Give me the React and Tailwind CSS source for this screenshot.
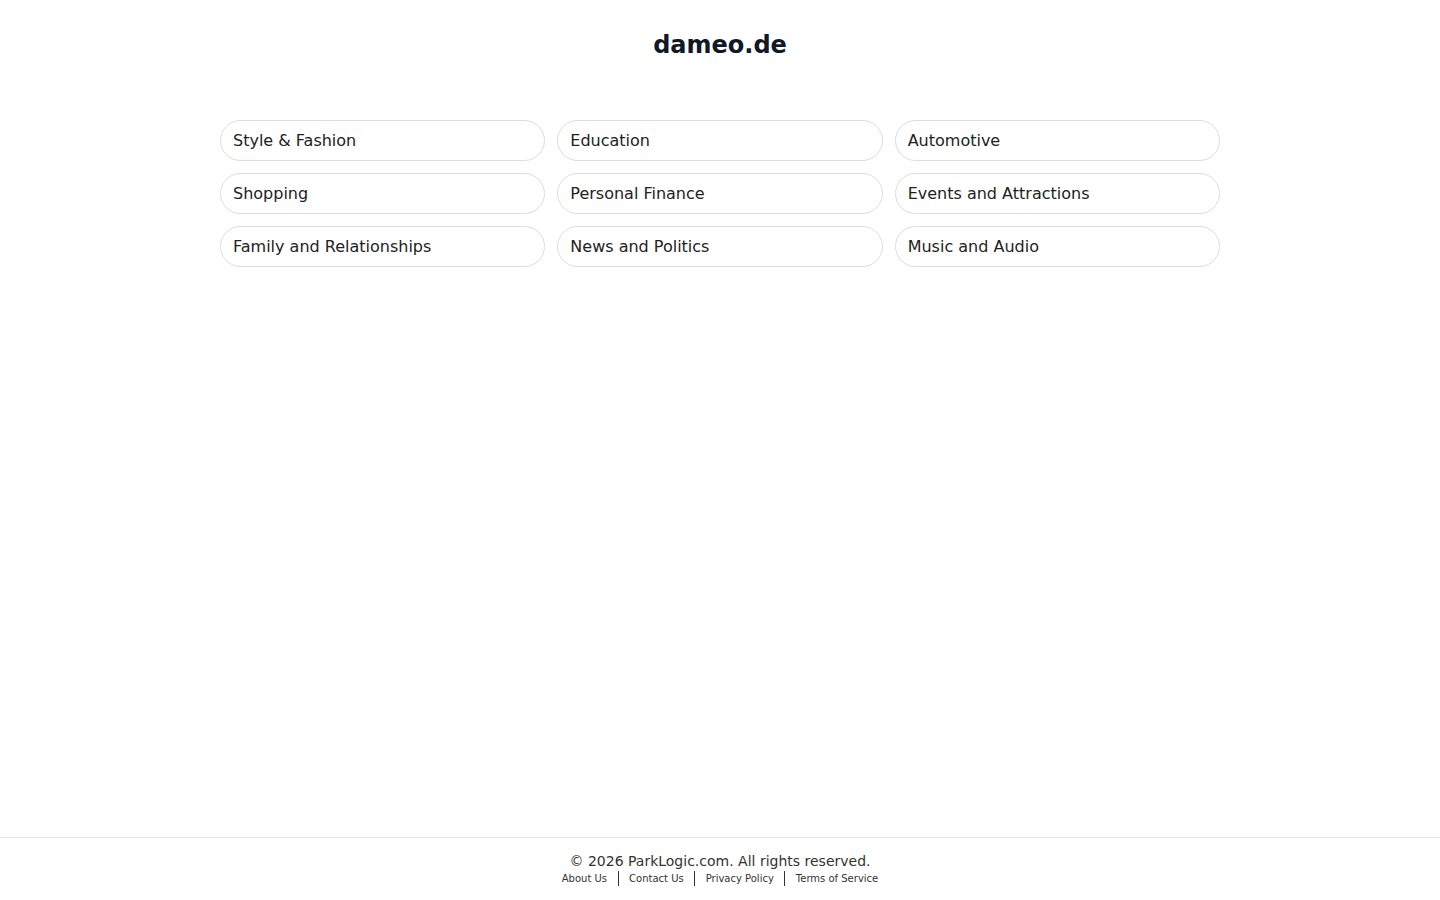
const categories = [
  "Style & Fashion",
  "Education",
  "Automotive",
  "Shopping",
  "Personal Finance",
  "Events and Attractions",
  "Family and Relationships",
  "News and Politics",
  "Music and Audio",
];

const links = ["About Us", "Contact Us", "Privacy Policy", "Terms of Service"];

export default function App() {
  return (
    <div className="flex min-h-screen flex-col bg-white font-['DejaVu_Sans',sans-serif] text-[#1f2937]">
      <main className="flex-1">
        <h1 className="pt-[29px] text-center text-2xl leading-8 font-bold text-[#111827]">dameo.de</h1>

        {/* Category grid */}
        <div className="mx-auto mt-[59px] grid w-[1000px] grid-cols-3 gap-3">
          {categories.map((c) => (
            <a
              key={c}
              href="#"
              className="flex h-[41px] items-center rounded-full border border-[#dcdcdc] px-[12px] text-base text-[#222]"
            >
              {c}
            </a>
          ))}
        </div>
      </main>

      <footer className="h-[63px] border-t border-[#e5e7eb] pt-[14px] text-center">
        <p className="text-sm leading-[18px] text-[#333]">© 2026 ParkLogic.com. All rights reserved.</p>
        <div className="mt-px flex items-center justify-center text-[10px] leading-[14px] text-[#333]">
          {links.map((l, i) => (
            <span key={l} className="flex items-center">
              {i > 0 && <span className="mx-[10.5px] h-[15px] w-px bg-[#333]" />}
              <a href="#">{l}</a>
            </span>
          ))}
        </div>
      </footer>
    </div>
  );
}
